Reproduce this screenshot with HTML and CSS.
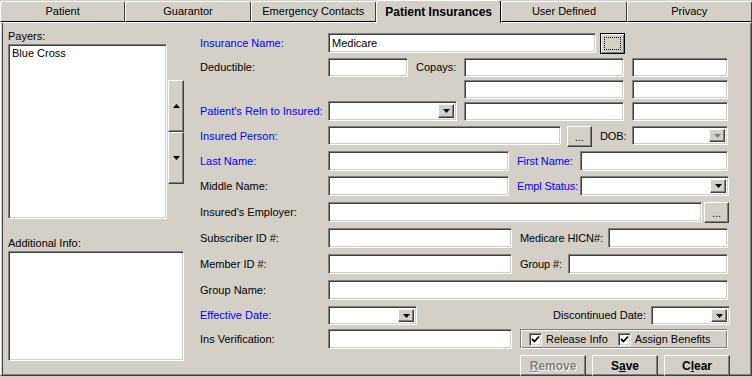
FILE: index.html
```html
<!DOCTYPE html>
<html lang="en">
<head>
    <meta charset="UTF-8">
    <title>Patient Insurances</title>
    <link rel="stylesheet" href="styles.css">
</head>
<body>
<div class="tabs">
    <div class="tab">Patient</div>
    <div class="tab">Guarantor</div>
    <div class="tab">Emergency Contacts</div>
    <div class="tab active">Patient Insurances</div>
    <div class="tab">User Defined</div>
    <div class="tab">Privacy</div>
</div>

<div class="panel">
    <!-- payers list + notes -->
    <div class="left">
        <div class="cap">Payers:</div>
        <div class="payers">
            <div class="field list">
                <div class="item">Blue Cross</div>
            </div>
            <div class="updown">
                <div class="btn move"><svg width="7" height="4"><polygon points="3.5,0 7,4 0,4" fill="#000"/></svg></div>
                <div class="btn move"><svg width="7" height="4"><polygon points="0,0 7,0 3.5,4" fill="#000"/></svg></div>
            </div>
        </div>
        <div class="cap cap2">Additional Info:</div>
        <div class="field notes"></div>
    </div>

    <div class="form">
        <div class="row h20">
            <span class="lbl req">Insurance Name:</span>
            <input class="field ins-name" type="text" value="Medicare">
            <div class="btn dflt"><span class="focus"></span></div>
        </div>

        <div class="row block">
            <span class="lbl ded-lbl">Deductible:</span>
            <input class="field ded" type="text">
            <span class="copay-lbl">Copays:</span>
            <input class="field c1 r1" type="text">
            <input class="field c2 r1" type="text">
            <input class="field c1 r2" type="text">
            <input class="field c2 r2" type="text">
            <span class="lbl req reln-lbl">Patient's Reln to Insured:</span>
            <div class="field combo reln"><div class="btn drop"><svg width="7" height="4"><polygon points="0,0 7,0 3.5,4" fill="#000"/></svg></div></div>
            <input class="field c1 r3" type="text">
            <input class="field c2 r3" type="text">
        </div>

        <div class="row h20">
            <span class="lbl req">Insured Person:</span>
            <input class="field w233" type="text">
            <div class="btn dots ml6">...</div>
            <span class="lbl2 dob-lbl">DOB:</span>
            <div class="field combo dob"><div class="btn drop"><svg width="7" height="4"><polygon points="0,0 7,0 3.5,4" fill="#808080"/></svg></div></div>
        </div>

        <div class="row h20">
            <span class="lbl req">Last Name:</span>
            <input class="field w181" type="text">
            <span class="lbl2 req w63">First Name:</span>
            <input class="field w148" type="text">
        </div>

        <div class="row">
            <span class="lbl">Middle Name:</span>
            <input class="field w181" type="text">
            <span class="lbl2 req w63">Empl Status:</span>
            <div class="field combo w149"><div class="btn drop"><svg width="7" height="4"><polygon points="0,0 7,0 3.5,4" fill="#000"/></svg></div></div>
        </div>

        <div class="row">
            <span class="lbl">Insured's Employer:</span>
            <input class="field w374" type="text">
            <div class="btn dots ml2">...</div>
        </div>

        <div class="row">
            <span class="lbl">Subscriber ID #:</span>
            <input class="field w184" type="text">
            <span class="lbl2 w88">Medicare HICN#:</span>
            <input class="field w120" type="text">
        </div>

        <div class="row">
            <span class="lbl">Member ID #:</span>
            <input class="field w184" type="text">
            <span class="lbl2 w48">Group #:</span>
            <input class="field w160" type="text">
        </div>

        <div class="row">
            <span class="lbl">Group Name:</span>
            <input class="field w400" type="text">
        </div>

        <div class="row short">
            <span class="lbl req">Effective Date:</span>
            <div class="field combo w89"><div class="btn drop"><svg width="7" height="4"><polygon points="0,0 7,0 3.5,4" fill="#000"/></svg></div></div>
            <span class="disc-lbl">Discontinued Date:</span>
            <div class="field combo w79"><div class="btn drop"><svg width="7" height="4"><polygon points="0,0 7,0 3.5,4" fill="#000"/></svg></div></div>
        </div>

        <div class="row">
            <span class="lbl">Ins Verification:</span>
            <input class="field w184" type="text">
            <div class="checks">
                <span class="chk"><svg width="9" height="9"><polyline points="1,4 3.5,6.5 8,1.5" fill="none" stroke="#000" stroke-width="1.8"/></svg></span>
                <span class="chk-txt">Release Info</span>
                <span class="chk"><svg width="9" height="9"><polyline points="1,4 3.5,6.5 8,1.5" fill="none" stroke="#000" stroke-width="1.8"/></svg></span>
                <span class="chk-txt">Assign Benefits</span>
            </div>
        </div>

        <div class="row actions">
            <div class="btn act disabled"><u>R</u>emove</div>
            <div class="btn act">S<u>a</u>ve</div>
            <div class="btn act">C<u>l</u>ear</div>
        </div>
    </div>
</div>
</body>
</html>
```

FILE: styles.css
```css
body {
    margin: 0;
    width: 752px;
    height: 378px;
    overflow: hidden;
    background: #d4d0c8;
    color: #000;
    font-family: "Liberation Sans", Arial, sans-serif;
    font-size: 11px;
}

/* tab strip */
.tabs {
    display: flex;
    height: 22px;
}
.tab {
    flex: 1;
    box-sizing: border-box;
    height: 21px;
    margin-top: 1px;
    border-top: 1px solid #fff;
    border-left: 1px solid #fff;
    border-right: 1px solid #404040;
    border-bottom: 1px solid #000;
    border-radius: 3px 3px 0 0;
    text-align: center;
    line-height: 19px;
}
.tab.active {
    position: relative;
    z-index: 1;
    height: 23px;
    margin-top: 0;
    margin-bottom: -1px;
    border-bottom: none;
    border-right-color: #000;
    background: #d4d0c8;
    font-weight: bold;
    font-size: 12px;
    line-height: 22px;
}

.panel {
    display: flex;
    height: 352px;
    border-top: 1px solid #fff;
    border-left: 1px solid #fff;
    border-right: 1px solid #404040;
    border-bottom: 1px solid #404040;
    box-shadow: inset 1px 0 0 #d4d0c8, inset 2px 0 0 #404040, inset -1px -1px 0 #808080;
}

/* sunken and raised boxes */
.field {
    box-sizing: border-box;
    margin: 0;
    padding: 0 3px;
    background: #fff;
    border-top: 1px solid #808080;
    border-left: 1px solid #808080;
    border-right: 1px solid #fff;
    border-bottom: 1px solid #fff;
    box-shadow: inset 1px 1px 0 #404040, inset -1px -1px 0 #d4d0c8;
    font: inherit;
    height: 20px;
    outline: none;
}
.btn {
    box-sizing: border-box;
    background: #d4d0c8;
    border-top: 1px solid #fff;
    border-left: 1px solid #fff;
    border-right: 1px solid #404040;
    border-bottom: 1px solid #404040;
    box-shadow: inset -1px -1px 0 #808080;
    display: flex;
    align-items: center;
    justify-content: center;
}

/* left column */
.left {
    width: 176px;
    margin-left: 7px;
    padding-top: 7px;
}
.cap {
    height: 14px;
    line-height: 13px;
}
.cap2 {
    margin-top: 18px;
}
.payers {
    display: flex;
}
.list {
    width: 160px;
    height: 175px;
    padding: 2px 3px;
}
.item {
    line-height: 13px;
}
.updown {
    width: 16px;
    margin-left: 1px;
    margin-top: 36px;
}
.move {
    width: 16px;
    height: 52px;
}
.notes {
    width: 176px;
    height: 110px;
}

/* right form */
.form {
    margin-left: 16px;
    padding-top: 10px;
    display: flex;
    flex-direction: column;
    gap: 5px;
}
.row {
    display: flex;
    align-items: flex-start;
    flex-shrink: 0;
    height: 21px;
}
.row.h20 {
    height: 20px;
}
.row.short {
    height: 18px;
}
.lbl {
    width: 128px;
    line-height: 20px;
    flex-shrink: 0;
}
.lbl2 {
    margin-left: 8px;
    line-height: 20px;
    letter-spacing: -0.1px;
}
.req {
    color: #0000ff;
}

.ins-name { width: 268px; }
.dflt {
    width: 25px;
    height: 21px;
    margin-left: 4px;
    border: 1px solid #000;
    box-shadow: inset 1px 1px 0 #fff, inset -1px -1px 0 #808080;
}
.focus {
    width: 15px;
    height: 11px;
    border: 1px dotted #000;
}
.dots {
    width: 25px;
    height: 21px;
    align-items: flex-end;
    padding-bottom: 5px;
    line-height: 8px;
}
.ml6 { margin-left: 6px; }
.ml2 { margin-left: 2px; }

/* deductible / copays block */
.block {
    height: 63px;
    display: grid;
    grid-template-columns: 128px 88px 48px 168px 96px;
    grid-template-rows: 19px 19px 20px;
    row-gap: 3px;
    align-items: start;
}
.ded-lbl { grid-row: 1; grid-column: 1; line-height: 19px; }
.ded { grid-row: 1; grid-column: 2; width: 80px; height: 19px; }
.copay-lbl { grid-row: 1; grid-column: 3; line-height: 19px; }
.c1 { grid-column: 4; width: 160px; height: 19px; }
.c2 { grid-column: 5; width: 96px; height: 19px; }
.r1 { grid-row: 1; }
.r2 { grid-row: 2; }
.r3 { grid-row: 3; }
.reln-lbl { grid-row: 3; grid-column: 1; margin-top: -1px; }
.reln { grid-row: 3; grid-column: 2 / 4; width: 129px; margin-top: -1px; }

.combo {
    display: flex;
    justify-content: flex-end;
    padding: 2px;
}
.drop {
    width: 16px;
    height: 100%;
}

.dob-lbl { width: 32px; }
.dob { width: 96px; height: 19px; }

.w63 { width: 63px; }
.w48 { width: 48px; }
.w88 { width: 88px; }
.w233 { width: 233px; height: 19px; }
.w181 { width: 181px; }
.w148 { width: 148px; }
.w149 { width: 149px; }
.w374 { width: 374px; }
.w184 { width: 184px; }
.w120 { width: 120px; }
.w160 { width: 160px; }
.w400 { width: 400px; }
.w89 { width: 89px; height: 19px; }
.w79 { width: 79px; height: 19px; }

.disc-lbl {
    margin-left: auto;
    margin-right: 5px;
    line-height: 19px;
}
.short .lbl { line-height: 19px; }

/* checkbox group */
.checks {
    box-sizing: border-box;
    width: 208px;
    height: 20px;
    margin-left: 8px;
    display: flex;
    align-items: center;
    padding-left: 8px;
    border: 1px solid #808080;
    border-right-color: #fff;
    border-bottom-color: #fff;
    box-shadow: inset 1px 1px 0 #fff, inset -1px -1px 0 #808080;
}
.chk {
    box-sizing: border-box;
    width: 13px;
    height: 13px;
    background: #fff;
    border-top: 1px solid #808080;
    border-left: 1px solid #808080;
    border-right: 1px solid #fff;
    border-bottom: 1px solid #fff;
    box-shadow: inset 1px 1px 0 #404040, inset -1px -1px 0 #d4d0c8;
    display: flex;
    align-items: center;
    justify-content: center;
}
.chk-txt {
    margin-left: 4px;
    margin-right: 10px;
}

/* action buttons */
.actions {
    padding-left: 320px;
    gap: 6px;
}
.act {
    width: 66px;
    height: 21px;
    font-weight: bold;
    font-size: 12px;
}
.act.disabled {
    color: #808080;
    text-shadow: 1px 1px 0 #fff;
}
```
